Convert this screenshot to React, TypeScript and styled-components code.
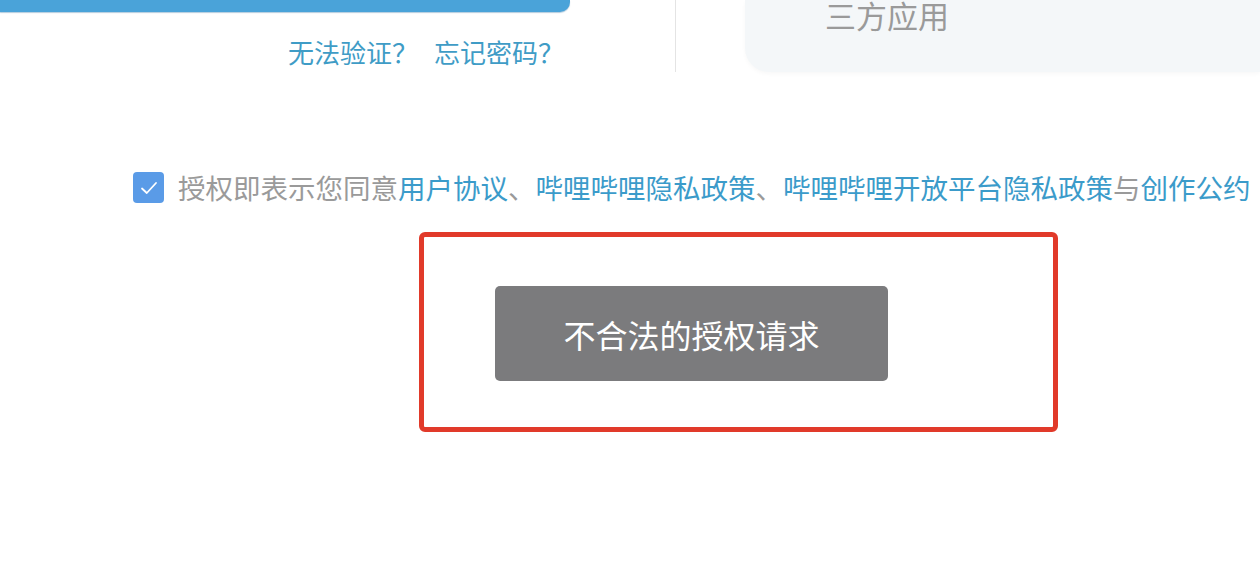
import React from 'react';
import styled, { createGlobalStyle } from 'styled-components';

const GlobalStyle = createGlobalStyle`
  html, body {
    margin: 0;
    padding: 0;
    background: #ffffff;
  }
  body {
    font-family: "Noto Sans CJK SC", "Noto Sans", sans-serif;
  }
`;

const Page = styled.div`
  width: 1260px;
  height: 570px;
  overflow: hidden;
  background: #fff;
`;

const TopRow = styled.div`
  display: flex;
  height: 72px;
`;

const LoginColumn = styled.div`
  width: 675px;
  display: flex;
  flex-direction: column;
`;

const LoginButtonEdge = styled.div`
  width: 570px;
  height: 12px;
  background: #4aa3d9;
  border-radius: 0 0 10px 0;
  box-shadow: 0 1px 1px rgba(40, 110, 160, 0.35);
`;

const HelpLinks = styled.div`
  width: 564px;
  margin-top: 27px;
  display: flex;
  justify-content: flex-end;
  gap: 16px;
  font-size: 26px;
  line-height: 26px;
`;

const Link = styled.a`
  color: #3f9cc6;
  text-decoration: none;
  cursor: pointer;
`;

const Divider = styled.div`
  width: 1px;
  height: 72px;
  background: #e4e4e4;
`;

const ThirdPartyPanel = styled.div`
  flex: 1;
  margin-left: 69px;
  height: 72px;
  background: #f4f7f9;
  border-radius: 0 0 0 24px;
  box-shadow: 0 2px 4px rgba(0, 0, 0, 0.03);
  padding-left: 80px;
  box-sizing: border-box;
  font-size: 31px;
  line-height: 30px;
  color: #9a9a9a;
`;

const AgreementRow = styled.div`
  display: flex;
  align-items: center;
  gap: 14px;
  margin-top: 100px;
  padding-left: 133px;
  height: 31px;
`;

const CheckBox = styled.div`
  width: 31px;
  height: 31px;
  flex: none;
  border-radius: 4px;
  background: #5a9be7;
  display: flex;
  align-items: center;
  justify-content: center;
`;

const AgreementText = styled.div`
  font-size: 27.5px;
  line-height: 31px;
  color: #9a9a9a;
  white-space: nowrap;
`;

const TermLink = styled.span`
  color: #3b9bca;
`;

const ErrorFrame = styled.div`
  width: 639px;
  height: 200px;
  box-sizing: border-box;
  margin-top: 29px;
  margin-left: 419px;
  border: 5px solid #e13a2a;
  border-radius: 6px;
  padding: 49px 0 0 71px;
`;

const DisabledButton = styled.button`
  width: 393px;
  height: 95px;
  border: none;
  border-radius: 5px;
  background: #7b7b7d;
  color: #ffffff;
  font-family: "Noto Sans CJK SC", "Noto Sans", sans-serif;
  font-size: 32px;
  padding: 0;
  cursor: not-allowed;
`;

const App = () => {
  return (
    <Page>
      <GlobalStyle />
      <TopRow>
        <LoginColumn>
          <LoginButtonEdge />
          <HelpLinks>
            <Link>无法验证？</Link>
            <Link>忘记密码？</Link>
          </HelpLinks>
        </LoginColumn>
        <Divider />
        <ThirdPartyPanel>三方应用</ThirdPartyPanel>
      </TopRow>
      <AgreementRow>
        <CheckBox>
          <svg width="18" height="14" viewBox="0 0 18 14" fill="none">
            <path d="M2 7.5 L6.8 12 L16 2" stroke="#fff" strokeWidth="1.8" strokeLinecap="round" strokeLinejoin="round" />
          </svg>
        </CheckBox>
        <AgreementText>
          授权即表示您同意<TermLink>用户协议</TermLink>、<TermLink>哔哩哔哩隐私政策</TermLink>、<TermLink>哔哩哔哩开放平台隐私政策</TermLink>与<TermLink>创作公约</TermLink>
        </AgreementText>
      </AgreementRow>
      <ErrorFrame>
        <DisabledButton disabled>不合法的授权请求</DisabledButton>
      </ErrorFrame>
    </Page>
  );
};

export default App;
